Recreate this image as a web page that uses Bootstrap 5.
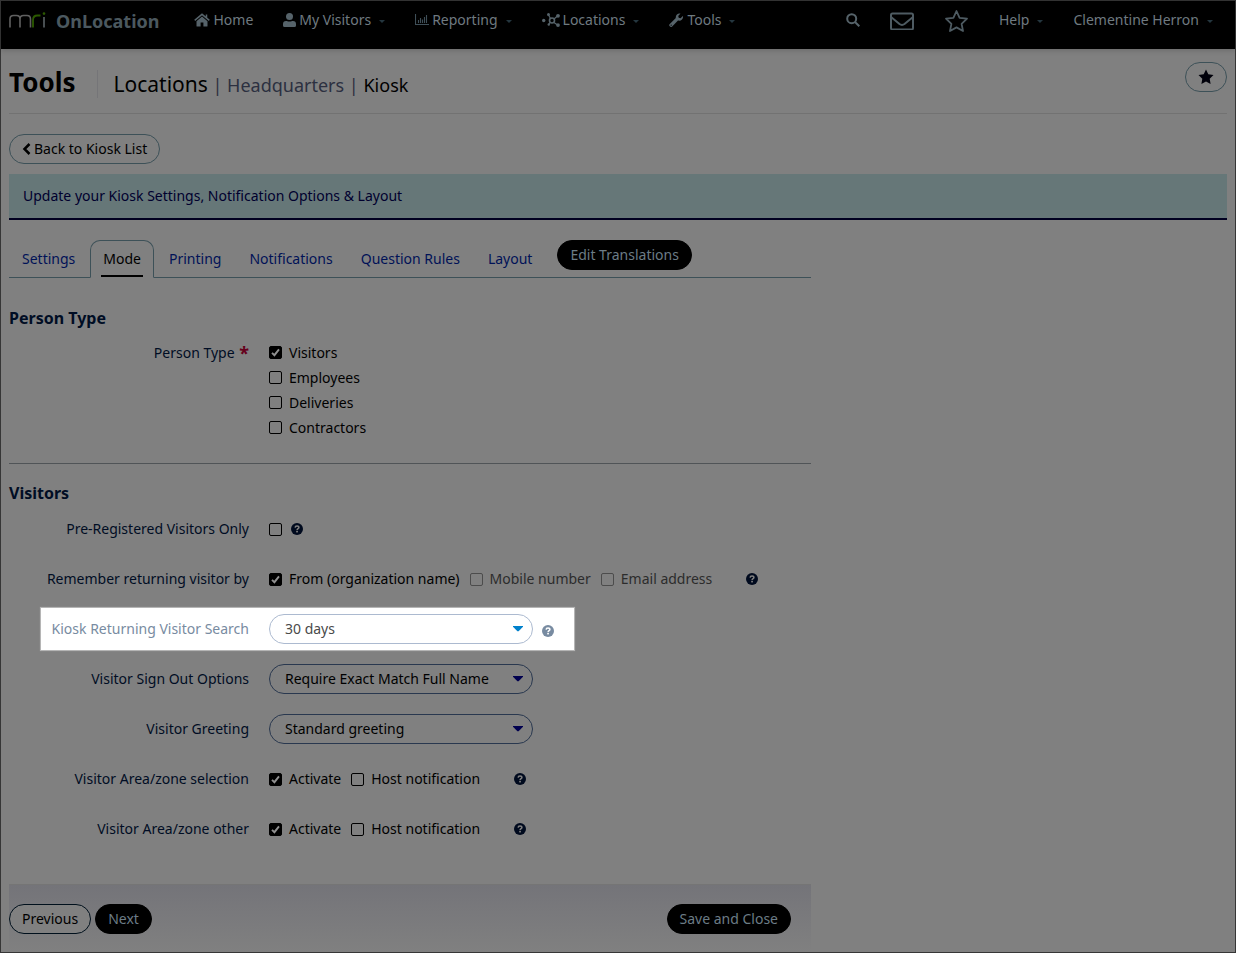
<!DOCTYPE html>
<html lang="en">
<head>
<meta charset="utf-8">
<meta name="viewport" content="width=device-width, initial-scale=1">
<title>OnLocation - Kiosk</title>
<link href="https://cdn.jsdelivr.net/npm/bootstrap@5.3.0/dist/css/bootstrap.min.css" rel="stylesheet">
<script src="https://cdn.jsdelivr.net/npm/bootstrap@5.3.0/dist/js/bootstrap.bundle.min.js" defer></script>
<style>
  :root { --page: #808080; --line: #3d5158; --ink: #000; --label: #000d24; --link: #001257; }
  body { font-family: "Noto Sans", "Open Sans", sans-serif; font-size: 14px; line-height: 20px; background: var(--page); color: var(--ink); }
  a { text-decoration: none; }
  .app-frame { min-height: 100vh; border: 1px solid #363636; }

  .top-bar { background: #000; height: 48px; padding: 0 7px 0 8px; color: #6f7a80; box-shadow: 0 1px 6px rgba(0, 0, 0, .2); }
  .top-bar .nav-link { color: #6f7a80; padding: 0 15px; height: 38px; display: flex; align-items: center; white-space: nowrap; }
  .top-bar .nav-link svg { margin-right: 3px; }
  .top-bar .nav-link.icon-only svg { margin: 0; }
  .top-bar .nav-link.icon-large { height: 40px; }
  .brand { color: #4b585f; font-size: 18px; font-weight: 700; line-height: 24px; padding-top: 8px; margin-right: 20px; }
  .brand svg { margin: 3px 10px 0 0; }
  .caret-down { width: 0; height: 0; border: 3px solid transparent; border-top-color: #24363f; border-bottom: 0; margin: 2px 0 0 8px; }

  .page-body { padding: 0 8px; }
  .page-head { height: 65px; padding-top: 13px; border-bottom: 1px solid #727272; margin-bottom: 20px; }
  .page-head h1 { font-size: 26px; line-height: 30px; font-weight: 700; margin: 0; padding: 5px 22px 0 0; }
  .crumbs { border-left: 1px solid #757578; padding: 0 0 0 15px; height: 28px; line-height: 28px; font-size: 18px; margin-top: 8px; color: #2e3040; }
  .crumbs a { color: #2c3040; }
  .crumbs .crumb-root { font-size: 21px; color: #000; }
  .crumbs .crumb-here { color: #000; }

  .btn-pill { --bs-btn-font-size: 14px; --bs-btn-padding-x: 12px; --bs-btn-padding-y: 4px; --bs-btn-line-height: 20px; --bs-btn-border-radius: 15px; height: 30px; --bs-btn-border-color: var(--line); --bs-btn-color: #000; white-space: nowrap; }
  .btn-solid { --bs-btn-bg: #000; --bs-btn-color: #6c7c86; --bs-btn-border-color: #000; }
  .btn-outlined { --bs-btn-border-color: #00101c; --bs-btn-bg: var(--page); }
  .btn-pill .chevron { margin: -2px 3px 0 0; }

  .notice { background: #667778; border-bottom: 2px solid #000020; color: #00002e; padding: 12px 14px; margin: 10px 0 20px; }

  .form-side { padding-right: 10px; }
  .kiosk-tabs { --bs-nav-tabs-border-color: var(--line); --bs-nav-tabs-link-active-bg: var(--page); --bs-nav-tabs-link-active-color: #000; --bs-nav-tabs-link-active-border-color: var(--line) var(--line) var(--page); --bs-nav-tabs-border-radius: 10px; --bs-nav-link-color: var(--link); --bs-nav-link-padding-x: 12px; --bs-nav-link-padding-y: 8px; }
  .kiosk-tabs .nav-link { margin-right: 2px; height: 38px; padding-bottom: 0; }
  .kiosk-tabs .nav-link.active { padding-left: 10px; padding-right: 10px; }
  .kiosk-tabs .nav-link.active span { display: block; padding: 0 2px; height: 28px; border-bottom: 2px solid #000; }
  .tab-action { margin-left: 10px; }

  h2 { font-size: 16px; line-height: 21px; font-weight: 700; margin: 0; color: var(--label); }
  .stacked h2 { margin: 30px 0 11px; }
  .field { display: flex; min-height: 50px; align-items: center; }
  .field-label { width: 240px; margin-right: 20px; flex: none; text-align: right; color: var(--label); white-space: nowrap; }
  .stacked .field-label { padding-top: 2px; line-height: 21px; }
  .required-mark { color: #66001c; font-size: 18px; font-weight: 700; line-height: 10px; vertical-align: -2px; margin-left: 1px; }
  .tick { display: flex; align-items: center; height: 25px; white-space: nowrap; margin-right: 10px; }
  .tick input, .tick-box { appearance: none; width: 13px; height: 13px; border: 1px solid #000; border-radius: 2px; margin: 0; flex: none; }
  .tick input { margin-right: 7px; }
  .tick-box { margin-right: 9px; }
  .tick input:checked { background: #000 url("data:image/svg+xml,%3Csvg xmlns='http://www.w3.org/2000/svg' viewBox='0 0 11 11'%3E%3Cpath d='M2 5.8 4.4 8.2 9 2.3' fill='none' stroke='%23909090' stroke-width='1.9'/%3E%3C/svg%3E") center / 11px no-repeat; }
  .tick input:disabled { border-color: #4c4c4c; }
  .tick input:disabled + span { color: #2c2c2c; }
  .help-btn { border: 0; background: none; padding: 0; line-height: 0; color: #000a1e; --mark: var(--page); }
  .pill-select { --bs-form-select-bg-img: none; width: 264px; height: 30px; font-size: 14px; line-height: 20px; padding: 4px 40px 4px 15px; border: 1px solid #29384f; border-radius: 15px; color: #000; background: url("data:image/svg+xml,%3Csvg xmlns='http://www.w3.org/2000/svg' viewBox='0 0 10 6'%3E%3Cpath d='M0 0H10V.8L5.6 5.2H4.4L0 .8Z' fill='%2300004f'/%3E%3C/svg%3E") right 9px top 11px / 10px 6px no-repeat; }
  .spotlight { min-height: 44px; width: 535px; margin: 3px 0 3px 31px; background-color: #fff; border: 1px solid #b5b5b5; box-shadow: 0 0 1px #a0a0a0; }
  .spotlight .field-label { width: 208px; color: #788ba1; }
  .spotlight .pill-select { color: #4a4a4a; border-color: #acbad0; background-image: url("data:image/svg+xml,%3Csvg xmlns='http://www.w3.org/2000/svg' viewBox='0 0 10 6'%3E%3Cpath d='M0 0H10V.8L5.6 5.2H4.4L0 .8Z' fill='%230081cc'/%3E%3C/svg%3E"); }
  .spotlight .help-btn { color: #788ba1; --mark: #fff; margin: 4px 0 0 9px; }
  .section-rule { height: 1px; background: #505457; margin: 23px 0 19px; }
  .form-foot { height: 68px; padding: 19px 20px 0 0; background: linear-gradient(#747479, #808080); border-top: 1px solid #757575; margin-top: 30px; }
</style>
</head>
<body>
<svg width="0" height="0" class="position-absolute" aria-hidden="true">
  <symbol id="help" viewBox="0 0 12 12">
    <circle cx="6" cy="6" r="6" fill="currentColor"/>
    <path d="M4.100 4.600C4.200 3.300 5 2.900 6 2.900c1.100 0 1.900.6 1.900 1.500C7.900 5.700 6.100 5.600 6.100 7" fill="none" stroke="var(--mark)" stroke-width="1.500"/>
    <rect x="5.200" y="7.800" width="1.700" height="1.600" fill="var(--mark)"/>
  </symbol>
</svg>
<div class="app-frame">
  <header class="top-bar d-flex">
    <a class="brand d-flex align-items-start" href="#">
      <svg width="37" height="16" viewBox="0 0 37 16" fill="none" stroke-width="1.600" aria-label="mri">
        <path d="M1 15.500V7Q1 3.500 4.500 3.500h3Q11 3.500 11 7v8.500M11 7q0-3.500 3.500-3.500h3.500Q21.500 3.500 21.500 7v8.500" stroke="#606060"/>
        <path d="M24 15.500V8q0-4.500 4.500-4.500h3" stroke="#2c5a00" stroke-width="1.800"/>
        <path d="M35 5v10.500" stroke="#5a6266"/><circle cx="35" cy="1.600" r="1.300" fill="#2c5a00"/>
      </svg><span>OnLocation</span></a>
    <nav class="d-flex flex-grow-1" aria-label="Main">
      <a class="nav-link" href="#"><svg width="16" height="14" viewBox="0 0 16 14" fill="#56636a"><path d="M8 3.600 2.500 8.300V13q0 .6.600.6h3.500V9.500h2.800v4.100h3.500q.6 0 .6-.6V8.300Z"/><path d="M.7 7.400 8 1.300l7.300 6.100M12.500 1.500v3.700" fill="none" stroke="#56636a" stroke-width="1.500"/></svg>Home</a>
      <a class="nav-link" href="#"><svg width="13" height="14" viewBox="0 0 13 14" fill="#56636a"><circle cx="6.500" cy="3.600" r="3.500"/><path d="M0 12.500V11q0-3 3-3h.8q2.700 1.200 5.400 0h.8q3 0 3 3v1.500q0 1.500-1.500 1.500h-10Q0 14 0 12.500Z"/></svg>My Visitors<i class="caret-down"></i></a>
      <a class="nav-link" href="#"><svg width="14" height="12" viewBox="0 0 14 12" fill="none" stroke="#3f4f58"><path d="M.5 0v10.500H14M3.500 9V6M5.500 9V4M7.500 9V5.500M9.500 9V3M11.500 9V1" stroke-width="1.100"/></svg>Reporting<i class="caret-down"></i></a>
      <a class="nav-link" href="#"><svg width="18" height="14" viewBox="0 0 18 14" fill="#56636a" stroke="#56636a"><circle cx="10" cy="7.500" r="2.500" fill="none" stroke-width="1.600"/><path d="m8.500 5.500-2-3.500m5.500 4 3.500-3M12 9.500l3.500 2.500M8 9.500 7 11" fill="none" stroke-width="1.200"/><g stroke="none"><circle cx="1.700" cy="7.500" r="1.700"/><circle cx="6.500" cy="1.500" r="1.500"/><circle cx="16" cy="2.800" r="1.900"/><circle cx="16" cy="12.100" r="1.900"/><circle cx="6.800" cy="11.500" r="1.200"/></g></svg>Locations<i class="caret-down"></i></a>
      <a class="nav-link" href="#"><svg width="15" height="14" viewBox="0 0 15 14"><path d="M13.900 3 11.500 5.300 9.700 4.800 9.200 3 11.500.6C9.500-.1 6.300 1.300 6.800 5L.8 10.900a1.700 1.700 0 0 0 2.400 2.500L9 7.600c3.600.8 5.700-2.300 4.900-4.600Z" fill="#56636a"/><circle cx="2.200" cy="12.200" r=".6"/></svg>Tools<i class="caret-down"></i></a>
    </nav>
    <nav class="d-flex" aria-label="Account">
      <a class="nav-link icon-only" href="#" aria-label="Search"><svg width="14" height="14" viewBox="0 0 14 14" fill="none" stroke="#56636a" stroke-width="2"><circle cx="5.700" cy="5.700" r="4.500"/><path d="m9 9 4.300 4.300"/></svg></a>
      <a class="nav-link icon-only icon-large" href="#" aria-label="Messages"><svg width="24" height="18" viewBox="0 0 24 18" fill="none" stroke="#4e5b62" stroke-width="2"><rect x="1" y="1.500" width="22" height="16" rx="1.500"/><path d="m1 5 8.500 7q2.500 1.800 5 0L23 5"/></svg></a>
      <a class="nav-link icon-only icon-large" href="#" aria-label="Favorites"><svg width="25" height="24" viewBox="0 0 25 24" fill="none" stroke="#4e5b62" stroke-width="1.800"><path d="m12.500 2 3.100 6.800 7.400.9-5.400 5.100 1.400 7.200-6.500-3.600L6 22l1.400-7.200L2 9.700l7.400-.9Z" stroke-linejoin="round"/></svg></a>
      <a class="nav-link" href="#">Help<i class="caret-down"></i></a>
      <a class="nav-link" href="#">Clementine Herron<i class="caret-down"></i></a>
    </nav>
  </header>

  <main class="page-body">
    <div class="page-head d-flex align-items-start">
      <h1>Tools</h1>
      <div class="crumbs flex-grow-1"><a class="crumb-root" href="#">Locations</a> | <a href="#">Headquarters</a> | <span class="crumb-here">Kiosk</span></div>
      <button type="button" class="btn btn-pill" aria-label="Add to favorites"><svg class="d-block" width="16" height="16" viewBox="0 0 16 16"><path d="m8 .5 2.300 4.800 5.200.7-3.800 3.700.9 5.300L8 12.500 3.400 15l.9-5.300L.5 6l5.200-.7Z" fill="#00000a"/></svg></button>
    </div>

    <a class="btn btn-pill" href="#"><svg width="9" height="12" viewBox="0 0 9 12" class="chevron"><path d="M7.500 1 2.500 6l5 5" fill="none" stroke="#000" stroke-width="2.500"/></svg>Back to Kiosk List</a>

    <div class="notice">Update your Kiosk Settings, Notification Options &amp; Layout</div>

    <div class="row g-0">
      <form class="col-8 form-side">
        <ul class="nav nav-tabs kiosk-tabs flex-nowrap text-nowrap">
          <li class="nav-item"><a class="nav-link" href="#">Settings</a></li>
          <li class="nav-item"><a class="nav-link active" aria-current="page" href="#"><span>Mode</span></a></li>
          <li class="nav-item"><a class="nav-link" href="#">Printing</a></li>
          <li class="nav-item"><a class="nav-link" href="#">Notifications</a></li>
          <li class="nav-item"><a class="nav-link" href="#">Question Rules</a></li>
          <li class="nav-item"><a class="nav-link" href="#">Layout</a></li>
          <li class="nav-item tab-action"><button type="button" class="btn btn-pill btn-solid">Edit Translations</button></li>
        </ul>

        <section class="stacked">
          <h2>Person Type</h2>
          <div class="d-flex">
            <div class="field-label" id="pt">Person Type <span class="required-mark">*</span></div>
            <div role="group" aria-labelledby="pt">
              <label class="tick"><input type="checkbox" checked><span>Visitors</span></label>
              <label class="tick"><input type="checkbox"><span>Employees</span></label>
              <label class="tick"><input type="checkbox"><span>Deliveries</span></label>
              <label class="tick"><input type="checkbox"><span>Contractors</span></label>
            </div>
          </div>
        </section>

        <div class="section-rule"></div>

        <section>
          <h2>Visitors</h2>
          <div class="field">
            <label class="field-label" for="pre">Pre-Registered Visitors Only</label>
            <input type="checkbox" class="tick-box" id="pre">
            <button type="button" class="help-btn" aria-label="Help"><svg width="12" height="12"><use href="#help"/></svg></button>
          </div>
          <div class="field">
            <div class="field-label">Remember returning visitor by</div>
            <label class="tick"><input type="checkbox" checked><span>From (organization name)</span></label>
            <label class="tick"><input type="checkbox" disabled><span>Mobile number</span></label>
            <label class="tick"><input type="checkbox" disabled><span>Email address</span></label>
            <button type="button" class="help-btn ms-4" aria-label="Help"><svg width="12" height="12"><use href="#help"/></svg></button>
          </div>
          <div class="field spotlight">
            <label class="field-label" for="search">Kiosk Returning Visitor Search</label>
            <select class="form-select pill-select" id="search"><option>30 days</option></select>
            <button type="button" class="help-btn" aria-label="Help"><svg width="12" height="12"><use href="#help"/></svg></button>
          </div>
          <div class="field">
            <label class="field-label" for="signout">Visitor Sign Out Options</label>
            <select class="form-select pill-select" id="signout"><option>Require Exact Match Full Name</option></select>
          </div>
          <div class="field">
            <label class="field-label" for="greet">Visitor Greeting</label>
            <select class="form-select pill-select" id="greet"><option>Standard greeting</option></select>
          </div>
          <div class="field">
            <div class="field-label">Visitor Area/zone selection</div>
            <label class="tick"><input type="checkbox" checked><span>Activate</span></label>
            <label class="tick"><input type="checkbox"><span>Host notification</span></label>
            <button type="button" class="help-btn ms-4" aria-label="Help"><svg width="12" height="12"><use href="#help"/></svg></button>
          </div>
          <div class="field">
            <div class="field-label">Visitor Area/zone other</div>
            <label class="tick"><input type="checkbox" checked><span>Activate</span></label>
            <label class="tick"><input type="checkbox"><span>Host notification</span></label>
            <button type="button" class="help-btn ms-4" aria-label="Help"><svg width="12" height="12"><use href="#help"/></svg></button>
          </div>
        </section>

        <div class="form-foot d-flex gap-1">
          <button type="button" class="btn btn-pill btn-outlined">Previous</button>
          <button type="button" class="btn btn-pill btn-solid">Next</button>
          <button type="submit" class="btn btn-pill btn-solid ms-auto">Save and Close</button>
        </div>
      </form>
    </div>
  </main>
</div>
</body>
</html>
